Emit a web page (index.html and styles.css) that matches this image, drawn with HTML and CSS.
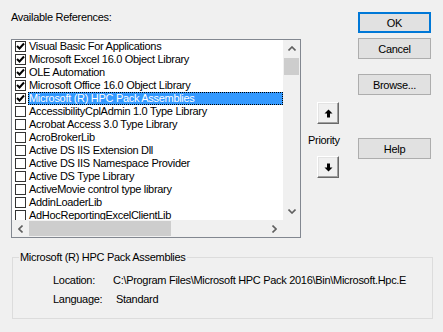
FILE: index.html
```html
<!DOCTYPE html>
<html lang="en">
<head>
    <meta charset="UTF-8">
    <title>References - VBAProject</title>
    <link rel="stylesheet" href="styles.css">
</head>
<body>
    <div class="dialog">
        <div class="top">
            <div class="refs">
                <div class="refs-label">Available References:</div>
                <div class="listbox">
                    <div class="items">
                        <div class="item"><span class="check on"><svg width="9" height="9" viewBox="0 0 9 9"><path d="M1 4 L3.5 6.5 L8 1.5" fill="none" stroke="#000" stroke-width="2"/></svg></span><span class="name">Visual Basic For Applications</span></div>
                        <div class="item"><span class="check on"><svg width="9" height="9" viewBox="0 0 9 9"><path d="M1 4 L3.5 6.5 L8 1.5" fill="none" stroke="#000" stroke-width="2"/></svg></span><span class="name">Microsoft Excel 16.0 Object Library</span></div>
                        <div class="item"><span class="check on"><svg width="9" height="9" viewBox="0 0 9 9"><path d="M1 4 L3.5 6.5 L8 1.5" fill="none" stroke="#000" stroke-width="2"/></svg></span><span class="name">OLE Automation</span></div>
                        <div class="item"><span class="check on"><svg width="9" height="9" viewBox="0 0 9 9"><path d="M1 4 L3.5 6.5 L8 1.5" fill="none" stroke="#000" stroke-width="2"/></svg></span><span class="name">Microsoft Office 16.0 Object Library</span></div>
                        <div class="item selected"><span class="check on"><svg width="9" height="9" viewBox="0 0 9 9"><path d="M1 4 L3.5 6.5 L8 1.5" fill="none" stroke="#000" stroke-width="2"/></svg></span><span class="name">Microsoft (R) HPC Pack Assemblies</span></div>
                        <div class="item"><span class="check"></span><span class="name">AccessibilityCplAdmin 1.0 Type Library</span></div>
                        <div class="item"><span class="check"></span><span class="name">Acrobat Access 3.0 Type Library</span></div>
                        <div class="item"><span class="check"></span><span class="name">AcroBrokerLib</span></div>
                        <div class="item"><span class="check"></span><span class="name">Active DS IIS Extension Dll</span></div>
                        <div class="item"><span class="check"></span><span class="name">Active DS IIS Namespace Provider</span></div>
                        <div class="item"><span class="check"></span><span class="name">Active DS Type Library</span></div>
                        <div class="item"><span class="check"></span><span class="name">ActiveMovie control type library</span></div>
                        <div class="item"><span class="check"></span><span class="name">AddinLoaderLib</span></div>
                        <div class="item"><span class="check"></span><span class="name">AdHocReportingExcelClientLib</span></div>
                    </div>
                    <div class="vscroll">
                        <span class="sb-arrow"><svg width="8" height="5" viewBox="0 0 8 5"><path d="M0.5 4.5 L4 1 L7.5 4.5" fill="none" stroke="#606060" stroke-width="1.6"/></svg></span>
                        <div class="vtrack"><div class="vthumb"></div></div>
                        <span class="sb-arrow"><svg width="8" height="5" viewBox="0 0 8 5"><path d="M0.5 0.5 L4 4 L7.5 0.5" fill="none" stroke="#606060" stroke-width="1.6"/></svg></span>
                    </div>
                    <div class="hscroll">
                        <span class="sb-arrow"><svg width="5" height="8" viewBox="0 0 5 8"><path d="M4.5 0.5 L1 4 L4.5 7.5" fill="none" stroke="#606060" stroke-width="1.6"/></svg></span>
                        <div class="htrack"><div class="hthumb"></div></div>
                        <span class="sb-arrow"><svg width="5" height="8" viewBox="0 0 5 8"><path d="M0.5 0.5 L4 4 L0.5 7.5" fill="none" stroke="#606060" stroke-width="1.6"/></svg></span>
                    </div>
                    <div class="corner"></div>
                </div>
            </div>

            <div class="priority">
                <button class="arrow-btn" type="button"><svg width="9" height="9" viewBox="0 0 9 9"><path d="M4.5 0.5 L8.5 4.5 L6 4.5 L6 8.5 L3 8.5 L3 4.5 L0.5 4.5 Z" fill="#000"/></svg></button>
                <span class="priority-label">Priority</span>
                <button class="arrow-btn" type="button"><svg width="9" height="9" viewBox="0 0 9 9"><path d="M4.5 8.5 L8.5 4.5 L6 4.5 L6 0.5 L3 0.5 L3 4.5 L0.5 4.5 Z" fill="#000"/></svg></button>
            </div>

            <div class="actions">
                <button class="btn default" type="button">OK</button>
                <button class="btn" type="button">Cancel</button>
                <button class="btn browse" type="button">Browse...</button>
                <button class="btn help" type="button">Help</button>
            </div>
        </div>

        <fieldset class="details">
            <legend>Microsoft (R) HPC Pack Assemblies</legend>
            <div class="detail-row">
                <span class="key">Location:</span>
                <span class="val">C:\Program Files\Microsoft HPC Pack 2016\Bin\Microsoft.Hpc.E</span>
            </div>
            <div class="detail-row">
                <span class="key">Language:</span>
                <span class="val lang">Standard</span>
            </div>
        </fieldset>
    </div>
</body>
</html>
```

FILE: styles.css
```css
body {
    margin: 0;
    background: #f0f0f0;
    font-family: 'Liberation Sans', Arial, sans-serif;
    font-size: 11px;
    letter-spacing: -0.3px;
    color: #000;
    width: 443px;
    height: 332px;
    overflow: hidden;
}

.top {
    display: flex;
    align-items: flex-start;
}

.refs {
    margin-left: 11px;
    width: 290px;
}

.refs-label {
    margin-top: 11px;
    line-height: 13px;
}

.listbox {
    margin-top: 15px;
    height: 199px;
    box-sizing: border-box;
    border: 1px solid #828790;
    background: #fff;
    display: grid;
    grid-template-columns: 1fr 17px;
    grid-template-rows: 1fr 17px;
}

.items {
    overflow: hidden;
}

.item {
    display: flex;
    align-items: center;
    height: 13px;
    white-space: nowrap;
}

.check {
    flex: none;
    width: 11px;
    height: 11px;
    box-sizing: border-box;
    border: 1px solid #333;
    background: #fff;
    margin-left: 3px;
    margin-right: 2px;
    display: flex;
    align-items: center;
    justify-content: center;
}

.name {
    padding: 0 1px;
    line-height: 13px;
}

.item.selected .name {
    flex: 1;
    background: #3399ff;
    color: #fff;
    outline: 1px dotted #000;
    outline-offset: -1px;
}

.vscroll {
    background: #f0f0f0;
    display: flex;
    flex-direction: column;
}

.hscroll {
    background: #f0f0f0;
    display: flex;
}

.corner {
    background: #f0f0f0;
}

.sb-arrow {
    flex: none;
    width: 17px;
    height: 17px;
    display: flex;
    align-items: center;
    justify-content: center;
}

.vtrack {
    flex: 1;
}

.vthumb {
    margin: 1px 1px 0;
    height: 17px;
    background: #cdcdcd;
}

.htrack {
    flex: 1;
    display: flex;
    align-items: center;
}

.hthumb {
    width: 142px;
    height: 15px;
    background: #cdcdcd;
}

.priority {
    margin-left: 7px;
    width: 36px;
    padding-top: 102px;
    display: flex;
    flex-direction: column;
    align-items: flex-start;
}

.arrow-btn {
    margin-left: 9px;
    width: 22px;
    height: 22px;
    padding: 0;
    background: #f0f0f0;
    border: 1px solid;
    border-color: #fff #696969 #696969 #fff;
    box-shadow: inset -1px -1px 0 #a0a0a0, inset 1px 1px 0 #e3e3e3;
    display: flex;
    align-items: center;
    justify-content: center;
}

.priority-label {
    margin: 10px 0 9px;
    line-height: 13px;
}

.actions {
    margin-left: 14px;
    padding-top: 12px;
    display: flex;
    flex-direction: column;
}

.btn {
    width: 73px;
    height: 21px;
    padding: 0;
    margin-bottom: 5px;
    font-family: inherit;
    font-size: 11px;
    letter-spacing: -0.3px;
    color: #000;
    background: #e1e1e1;
    border: 1px solid #adadad;
}

.btn.default {
    border: 2px solid #0078d7;
}

.btn.browse {
    margin-top: 10px;
}

.btn.help {
    margin-top: 38px;
}

.details {
    margin: 13px 0 0 12px;
    width: 421px;
    height: 68px;
    box-sizing: border-box;
    padding: 10px 0 0 6px;
    border: 1px solid #dcdcdc;
}

.details legend {
    padding: 0 1px;
    line-height: 13px;
}

.detail-row {
    display: flex;
    height: 19px;
    line-height: 13px;
    white-space: nowrap;
}

.key {
    margin-left: 34px;
    width: 60px;
}

.val {
    width: 296px;
    overflow: hidden;
}

.val.lang {
    margin-left: 3px;
}
```
